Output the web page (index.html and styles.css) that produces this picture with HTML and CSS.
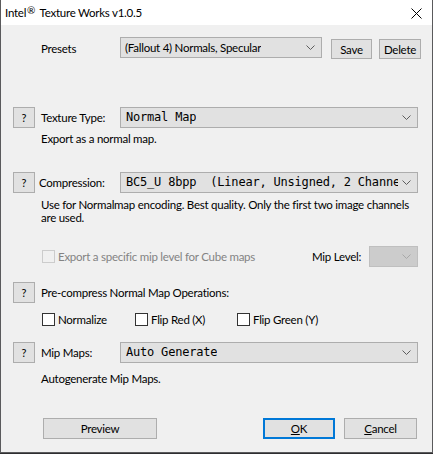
FILE: index.html
```html
<!DOCTYPE html>
<html>
<head>
<meta charset="utf-8">
<link rel="stylesheet" href="styles.css">
</head>
<body>
<div class="window">
  <div class="titlebar">
    <span class="title">Intel<sup class="reg">®</sup> Texture Works v1.0.5</span>
    <svg class="close" width="11" height="11" viewBox="0 0 11 11"><path d="M0.5 0.5 L10.5 10.5 M10.5 0.5 L0.5 10.5" stroke="#000" stroke-width="1" fill="none"/></svg>
  </div>
  <div class="client">
    <div class="row presets">
      <span class="label">Presets</span>
      <div class="combo combo-presets"><span class="ctext">(Fallout 4) Normals, Specular</span><svg class="chev" width="9" height="5" viewBox="0 0 9 5"><path d="M0.5 0.5 L4.5 4.5 L8.5 0.5" stroke="#5d5d5d" fill="none"/></svg></div>
      <button class="btn save">Save</button>
      <button class="btn delete">Delete</button>
    </div>

    <div class="row r-texture">
      <button class="help">?</button>
      <span class="label">Texture Type:</span>
      <div class="combo combo-wide"><span class="ctext mono">Normal Map</span><svg class="chev" width="9" height="5" viewBox="0 0 9 5"><path d="M0.5 0.5 L4.5 4.5 L8.5 0.5" stroke="#5d5d5d" fill="none"/></svg></div>
    </div>
    <p class="desc d-texture">Export as a normal map.</p>

    <div class="row r-compression">
      <button class="help">?</button>
      <span class="label label-comp">Compression:</span>
      <div class="combo combo-wide"><span class="ctext mono clip">BC5_U 8bpp&nbsp; (Linear, Unsigned, 2 Channels)</span><svg class="chev" width="9" height="5" viewBox="0 0 9 5"><path d="M0.5 0.5 L4.5 4.5 L8.5 0.5" stroke="#5d5d5d" fill="none"/></svg></div>
    </div>
    <p class="desc d-comp">Use for Normalmap encoding. Best quality. Only the first two image channels<br>are used.</p>

    <div class="row r-mip">
      <span class="check disabled"></span>
      <span class="dis-text">Export a specific mip level for Cube maps</span>
      <span class="miplabel">Mip Level:</span>
      <div class="combo combo-mip"><svg class="chev" width="9" height="5" viewBox="0 0 9 5"><path d="M0.5 0.5 L4.5 4.5 L8.5 0.5" stroke="#a8a8a8" fill="none"/></svg></div>
    </div>

    <div class="row r-pre">
      <button class="help">?</button>
      <span class="label">Pre-compress Normal Map Operations:</span>
    </div>

    <div class="row r-checks">
      <label class="cb cb1"><span class="check"></span>Normalize</label>
      <label class="cb cb2"><span class="check"></span>Flip Red (X)</label>
      <label class="cb cb3"><span class="check"></span>Flip Green (Y)</label>
    </div>

    <div class="row r-mipmaps">
      <button class="help">?</button>
      <span class="label">Mip Maps:</span>
      <div class="combo combo-wide"><span class="ctext mono">Auto Generate</span><svg class="chev" width="9" height="5" viewBox="0 0 9 5"><path d="M0.5 0.5 L4.5 4.5 L8.5 0.5" stroke="#5d5d5d" fill="none"/></svg></div>
    </div>
    <p class="desc d-mip">Autogenerate Mip Maps.</p>

    <div class="row r-bottom">
      <button class="btn preview">Preview</button>
      <button class="btn ok"><u>O</u>K</button>
      <button class="btn cancel"><u>C</u>ancel</button>
    </div>
  </div>
</div>
</body>
</html>
```

FILE: styles.css
```css
* { box-sizing: border-box; }
html, body { margin: 0; padding: 0; }
body {
  width: 433px;
  height: 454px;
  background: #2e2e30;
  font-family: Lato, "Liberation Sans", sans-serif;
  font-size: 11.5px;
  letter-spacing: -0.25px;
  line-height: 15px;
  color: #000;
  overflow: hidden;
}
.window {
  width: 433px;
  height: 453px;
  border-left: 1px solid #5a5a5c;
  border-right: 1px solid #5a5a5c;
  border-bottom: 1px solid #5a5a5c;
  background: #f0f0f0;
  display: flex;
  flex-direction: column;
}
.titlebar {
  height: 25px;
  flex: none;
  background: #fff;
  display: flex;
  align-items: center;
  padding-left: 4px;
  padding-right: 10px;
  justify-content: space-between;
}
.title { font-size: 11.5px; line-height: 14px; }
.reg { font-size: 10px; vertical-align: 3px; line-height: 0; margin-left: 1px; margin-right: 2px; }
.close { margin-top: 1px; }
.client {
  flex: 1;
  display: flex;
  flex-direction: column;
}
.row { display: flex; align-items: center; flex: none; }
.help {
  width: 22px;
  height: 21px;
  margin: 0 6px 0 12px;
  padding: 0;
  background: #e1e1e1;
  border: 1px solid #adadad;
  font-family: inherit;
  font-size: 11px;
  color: #000;
}
.label { width: 79px; white-space: nowrap; }
.label-comp { margin-left: -2px; width: 81px; }
.combo {
  height: 21px;
  background: #e1e1e1;
  border: 1px solid #adadad;
  display: flex;
  align-items: center;
  justify-content: space-between;
  padding: 0 6px 0 4px;
  overflow: hidden;
}
.ctext { white-space: nowrap; overflow: hidden; }
.mono { font-family: "DejaVu Sans Mono", "Liberation Mono", monospace; font-size: 12px; letter-spacing: -0.2px; padding-left: 1px; }
.clip { flex: 1; }
.chev { flex: none; margin-left: 4px; }
.combo-wide { width: 298px; }
.combo-presets { width: 202px; }
.combo-mip { width: 49px; background: #cccccc; border-color: #bfbfbf; justify-content: flex-end; }

.presets { margin-top: 12px; padding-left: 40px; align-items: flex-start; height: 22px; }
.presets .label { align-self: center; }
.btn {
  height: 21px;
  background: #e1e1e1;
  border: 1px solid #adadad;
  font-family: inherit;
  font-size: 11.5px;
  letter-spacing: -0.25px;
  color: #000;
  padding: 0;
}
.save { width: 41px; margin-left: 9px; margin-top: 2px; height: 20px; }
.delete { width: 42px; margin-left: 7px; margin-top: 2px; height: 20px; }

.desc { margin: 0; padding-left: 40px; line-height: 13px; flex: none; white-space: nowrap; }
.r-texture { margin-top: 48px; }
.d-texture { margin-top: 4px; }
.r-compression { margin-top: 27px; }
.d-comp { margin-top: 5px; }
.r-mip { margin-top: 22px; height: 21px; padding-left: 41px; }
.check {
  width: 13px;
  height: 13px;
  border: 1px solid #333;
  background: #fff;
  flex: none;
  display: inline-block;
}
.check.disabled { border-color: #cccccc; background: #f0f0f0; }
.dis-text { color: #838383; margin-left: 3px; width: 254px; white-space: nowrap; }
.miplabel { width: 57px; white-space: nowrap; }
.r-pre { margin-top: 15px; }
.r-checks { margin-top: 10px; height: 13px; padding-left: 41px; }
.cb { display: flex; align-items: center; gap: 3px; white-space: nowrap; }
.cb1 { width: 93px; }
.cb2 { width: 102px; }
.r-mipmaps { margin-top: 16px; }
.d-mip { margin-top: 9px; }
.r-bottom { margin-top: 33px; padding-left: 42px; }
.preview { width: 114px; }
.ok { width: 72px; margin-left: 106px; border: 2px solid #0078d7; }
.cancel { width: 73px; margin-left: 9px; }
```
